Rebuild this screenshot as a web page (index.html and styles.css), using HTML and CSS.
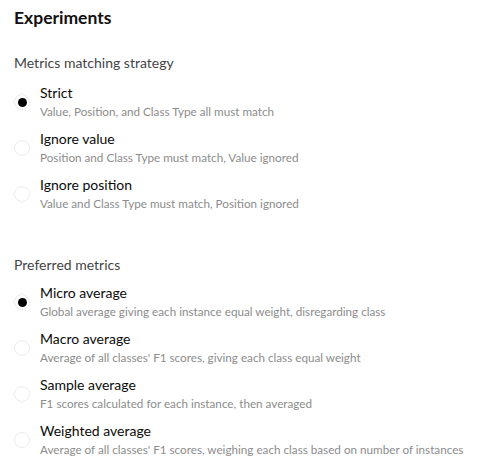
FILE: index.html
```html
<!DOCTYPE html>
<html>
<head>
<meta charset="utf-8">
<link rel="stylesheet" href="styles.css">
</head>
<body>
<div class="page">
  <h1 class="title">Experiments</h1>

  <section class="group">
    <h2 class="group-label">Metrics matching strategy</h2>
    <div class="options">
      <label class="option">
        <span class="radio checked"></span>
        <span class="text">
          <span class="opt-title">Strict</span>
          <span class="opt-desc">Value, Position, and Class Type all must match</span>
        </span>
      </label>
      <label class="option">
        <span class="radio"></span>
        <span class="text">
          <span class="opt-title">Ignore value</span>
          <span class="opt-desc">Position and Class Type must match, Value ignored</span>
        </span>
      </label>
      <label class="option">
        <span class="radio"></span>
        <span class="text">
          <span class="opt-title">Ignore position</span>
          <span class="opt-desc">Value and Class Type must match, Position ignored</span>
        </span>
      </label>
    </div>
  </section>

  <section class="group second">
    <h2 class="group-label">Preferred metrics</h2>
    <div class="options">
      <label class="option">
        <span class="radio checked"></span>
        <span class="text">
          <span class="opt-title">Micro average</span>
          <span class="opt-desc">Global average giving each instance equal weight, disregarding class</span>
        </span>
      </label>
      <label class="option">
        <span class="radio"></span>
        <span class="text">
          <span class="opt-title">Macro average</span>
          <span class="opt-desc">Average of all classes' F1 scores, giving each class equal weight</span>
        </span>
      </label>
      <label class="option">
        <span class="radio"></span>
        <span class="text">
          <span class="opt-title">Sample average</span>
          <span class="opt-desc">F1 scores calculated for each instance, then averaged</span>
        </span>
      </label>
      <label class="option">
        <span class="radio"></span>
        <span class="text">
          <span class="opt-title">Weighted average</span>
          <span class="opt-desc">Average of all classes' F1 scores, weighing each class based on number of instances</span>
        </span>
      </label>
    </div>
  </section>
</div>
</body>
</html>
```

FILE: styles.css
```css
* { box-sizing: border-box; }
html, body {
  margin: 0;
  padding: 0;
  background: #ffffff;
}
body {
  font-family: "Lato", "Noto Sans", sans-serif;
  color: #111111;
}
.page {
  padding: 8px 14px 0 14px;
  display: flex;
  flex-direction: column;
}
.title {
  margin: 0;
  font-size: 17.5px;
  line-height: 20px;
  font-weight: 700;
  color: #111;
}
.group {
  margin-top: 26px;
  display: flex;
  flex-direction: column;
}
.group.second {
  margin-top: 44px;
}
.group.second .options {
  margin-top: 10px;
}
.group-label {
  margin: 0;
  font-size: 14px;
  line-height: 18px;
  font-weight: 400;
  color: #444444;
}
.options {
  margin-top: 12px;
  display: flex;
  flex-direction: column;
  gap: 10px;
}
.option {
  display: flex;
  align-items: center;
  gap: 10px;
}
.radio {
  width: 16px;
  height: 16px;
  border-radius: 50%;
  border: 1px solid #ececec;
  display: flex;
  align-items: center;
  justify-content: center;
  flex: none;
}
.radio.checked::after {
  content: "";
  width: 9px;
  height: 9px;
  border-radius: 50%;
  background: #000;
}
.text {
  display: flex;
  flex-direction: column;
}
.opt-title {
  font-size: 14px;
  line-height: 18px;
  font-weight: 400;
  color: #0a0a0a;
}
.opt-desc {
  font-size: 11.7px;
  line-height: 18px;
  color: #8c8c8c;
}
```
